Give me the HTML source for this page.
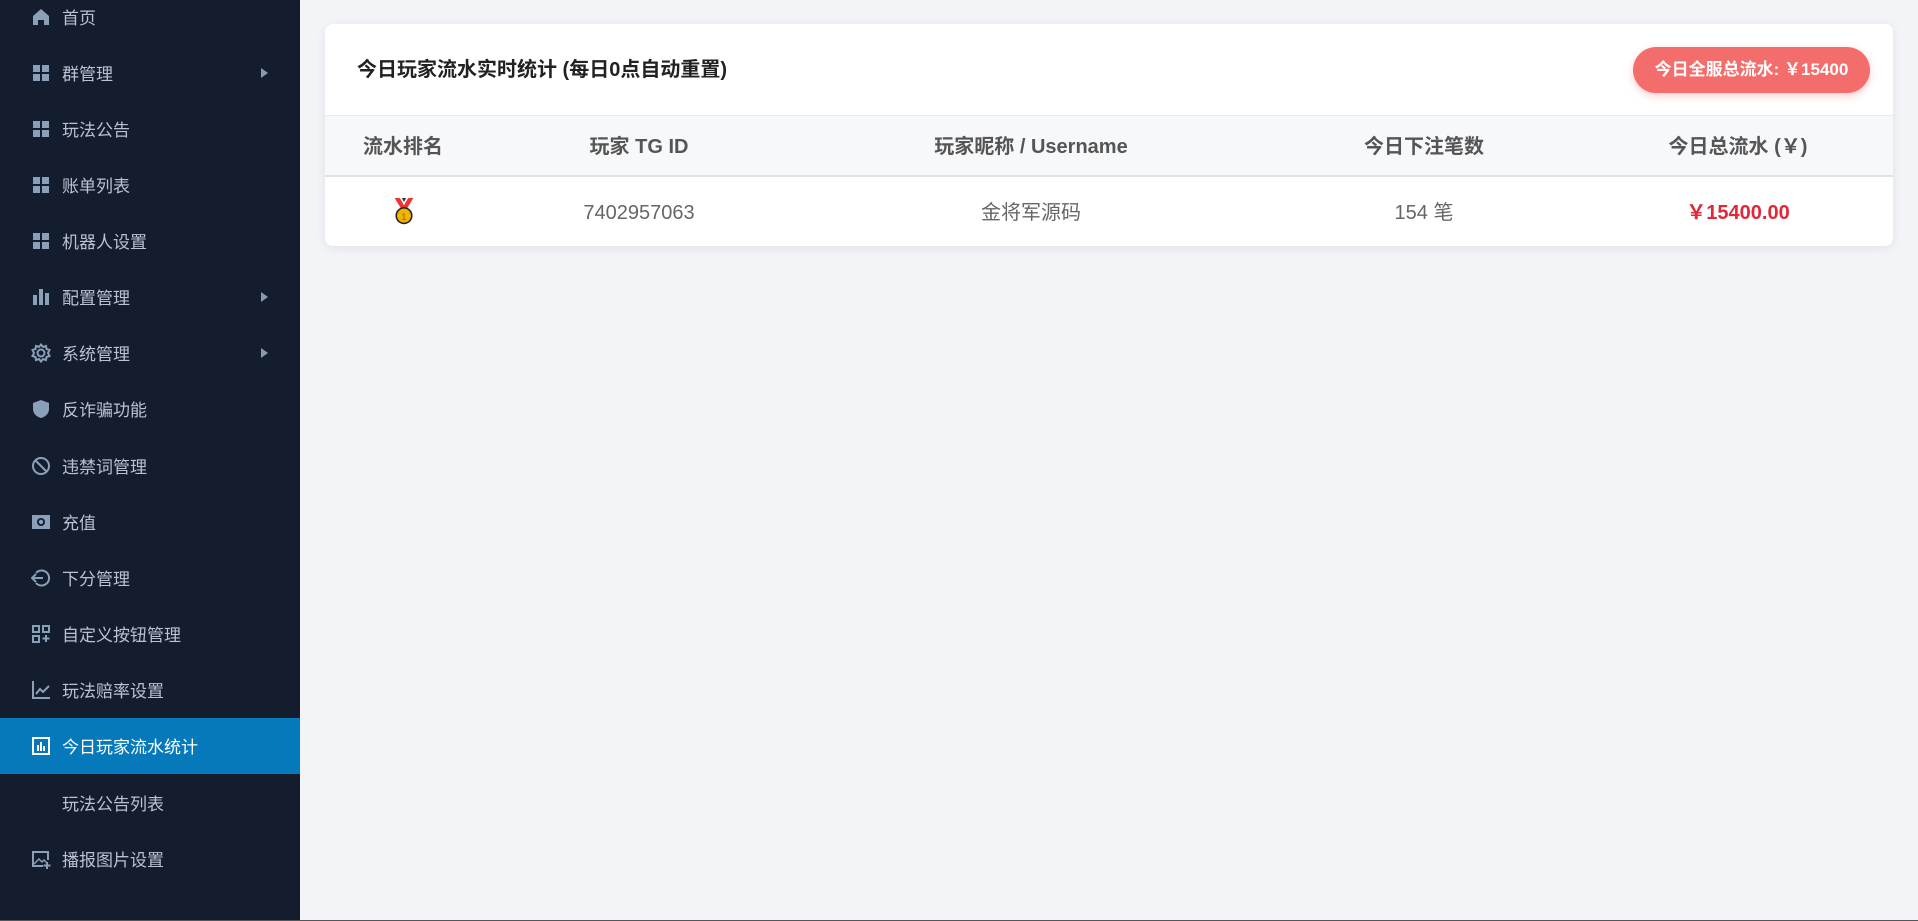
<!DOCTYPE html>
<html><head><meta charset="utf-8"><style>
*{margin:0;padding:0;box-sizing:border-box}
body{width:1918px;height:921px;background:#f2f4f8;font-family:"Liberation Sans","Noto Sans CJK SC",sans-serif;position:relative;overflow:hidden}
.sb{position:absolute;left:0;top:0;width:300px;height:920px;background:#141d2e}
.bl{position:absolute;left:0;top:920px;width:1918px;height:1px;background:#555}
.it{position:absolute;left:0;width:300px;height:56px;color:#b8c2d0;font-size:17px;line-height:20px}
.it .ic{position:absolute;left:31px;width:20px;height:20px;top:18px}
.it span{position:absolute;left:62px;top:20px}
.it .ar{position:absolute;left:261px;top:23px;width:0;height:0;border-left:7px solid #8a99ad;border-top:5px solid transparent;border-bottom:5px solid transparent}
.act{background:#0679bb;color:#fff}
.card{position:absolute;left:325px;top:24px;width:1568px;height:222px;background:#fff;border-radius:8px;box-shadow:0 2px 10px rgba(0,0,0,.08);overflow:hidden}
.title{position:absolute;left:32px;top:34px;font-size:20px;line-height:24px;font-weight:bold;color:#222}
.badge{position:absolute;left:1308px;top:23px;width:237px;height:46px;border-radius:23px;background:#f36d6d;color:#fff;font-weight:bold;font-size:17px;line-height:20px;display:flex;align-items:center;justify-content:center;box-shadow:0 3px 8px rgba(243,109,109,.35)}
.th{position:absolute;left:0;top:91px;width:1568px;height:62px;background:#f7f8fa;border-top:1px solid #e8eaee;border-bottom:2px solid #dfe2e6}
.c{position:absolute;transform:translateX(-50%);white-space:nowrap;font-size:20px;line-height:24px}
.h{top:19px;font-weight:bold;color:#555}
.r{top:177px;color:#666}
</style></head><body>
<div class="sb">
<div class="it" style="top:-11px"><svg class="ic" viewBox="0 0 20 20"><path d="M2 9L10 2l8 7v9h-5v-5H7v5H2z" fill="#8a9fb8"/></svg><span>首页</span></div>
<div class="it" style="top:45px"><svg class="ic" viewBox="0 0 20 20" fill="#8a9fb8"><rect x="2" y="2" width="7" height="7"/><rect x="11" y="2" width="7" height="7"/><rect x="2" y="11" width="7" height="7"/><rect x="11" y="11" width="7" height="7"/></svg><span>群管理</span><i class="ar"></i></div>
<div class="it" style="top:101px"><svg class="ic" viewBox="0 0 20 20" fill="#8a9fb8"><rect x="2" y="2" width="7" height="7"/><rect x="11" y="2" width="7" height="7"/><rect x="2" y="11" width="7" height="7"/><rect x="11" y="11" width="7" height="7"/></svg><span>玩法公告</span></div>
<div class="it" style="top:157px"><svg class="ic" viewBox="0 0 20 20" fill="#8a9fb8"><rect x="2" y="2" width="7" height="7"/><rect x="11" y="2" width="7" height="7"/><rect x="2" y="11" width="7" height="7"/><rect x="11" y="11" width="7" height="7"/></svg><span>账单列表</span></div>
<div class="it" style="top:213px"><svg class="ic" viewBox="0 0 20 20" fill="#8a9fb8"><rect x="2" y="2" width="7" height="7"/><rect x="11" y="2" width="7" height="7"/><rect x="2" y="11" width="7" height="7"/><rect x="11" y="11" width="7" height="7"/></svg><span>机器人设置</span></div>
<div class="it" style="top:269px"><svg class="ic" viewBox="0 0 20 20" fill="#8a9fb8"><rect x="2" y="8" width="4" height="10"/><rect x="8" y="2" width="4" height="16"/><rect x="14" y="6" width="4" height="12"/></svg><span>配置管理</span><i class="ar"></i></div>
<div class="it" style="top:325px"><svg class="ic" viewBox="0 0 20 20" fill="none" stroke="#8a9fb8" stroke-width="2"><circle cx="10" cy="10" r="3.5"/><path d="M10 1.5l2 2.5 3-1 .5 3 3 1-1.5 3 1.5 3-3 1-.5 3-3-1-2 2.5-2-2.5-3 1-.5-3-3-1L3 10 1.5 7l3-1 .5-3 3 1z"/></svg><span>系统管理</span><i class="ar"></i></div>
<div class="it" style="top:381px"><svg class="ic" viewBox="0 0 20 20"><path d="M10 1l8 3v6c0 5-4 8-8 9-4-1-8-4-8-9V4z" fill="#8a9fb8"/></svg><span>反诈骗功能</span></div>
<div class="it" style="top:438px"><svg class="ic" viewBox="0 0 20 20" fill="none" stroke="#8a9fb8" stroke-width="2"><circle cx="10" cy="10" r="8"/><path d="M4.5 4.5l11 11"/></svg><span>违禁词管理</span></div>
<div class="it" style="top:494px"><svg class="ic" viewBox="0 0 20 20"><rect x="1" y="3" width="18" height="14" fill="#8a9fb8"/><circle cx="10" cy="10" r="4" fill="#141d2e"/><circle cx="10" cy="10" r="2.2" fill="#8a9fb8"/></svg><span>充值</span></div>
<div class="it" style="top:550px"><svg class="ic" viewBox="0 0 20 20" fill="none" stroke="#8a9fb8" stroke-width="2"><path d="M5 5a7.5 7.5 0 1 1 0 10"/><path d="M1 10h11M5 6l-4 4 4 4"/></svg><span>下分管理</span></div>
<div class="it" style="top:606px"><svg class="ic" viewBox="0 0 20 20" fill="none" stroke="#8a9fb8" stroke-width="2"><rect x="2" y="2" width="6" height="6"/><rect x="12" y="2" width="6" height="6"/><rect x="2" y="12" width="6" height="6"/><path d="M15 11v7M11.5 14.5h7"/></svg><span>自定义按钮管理</span></div>
<div class="it" style="top:662px"><svg class="ic" viewBox="0 0 20 20" fill="none" stroke="#8a9fb8" stroke-width="2"><path d="M2 1v17h17M5 14l4-5 3 3 6-6"/></svg><span>玩法赔率设置</span></div>
<div class="it act" style="top:718px"><svg class="ic" viewBox="0 0 20 20"><rect x="2" y="2" width="16" height="16" fill="none" stroke="#fff" stroke-width="2"/><rect x="6" y="9" width="2" height="6" fill="#fff"/><rect x="9" y="6" width="2" height="9" fill="#fff"/><rect x="12" y="10" width="2" height="5" fill="#fff"/></svg><span>今日玩家流水统计</span></div>
<div class="it" style="top:775px"><span>玩法公告列表</span></div>
<div class="it" style="top:831px"><svg class="ic" viewBox="0 0 20 20" fill="none" stroke="#8a9fb8" stroke-width="2"><path d="M12 17H2V3h15v8"/><path d="M3 15l5-5 3 3 2-2 3 3" stroke-width="1.5"/><path d="M16 13v7M12.5 16.5h7"/></svg><span>播报图片设置</span></div>
</div>
<div class="bl"></div>
<div class="card">
<div class="title">今日玩家流水实时统计 (每日0点自动重置)</div>
<div class="badge">今日全服总流水: ￥15400</div>
<div class="th">
<div class="c h" style="left:78px">流水排名</div>
<div class="c h" style="left:314px">玩家 TG ID</div>
<div class="c h" style="left:706px">玩家昵称 / Username</div>
<div class="c h" style="left:1099px">今日下注笔数</div>
<div class="c h" style="left:1413px">今日总流水 (￥)</div>
</div>
<svg style="position:absolute;left:68px;top:173px" width="22" height="29" viewBox="0 0 20 28"><path d="M1 1h18l-6 10H7z" fill="#e33"/><path d="M6 1h8l-4 7z" fill="#fff"/><path d="M8 1h4l-2 4z" fill="#333"/><circle cx="10" cy="18" r="7.5" fill="#f0b400" stroke="#222" stroke-width="1.5"/><text x="10" y="22" font-size="9" text-anchor="middle" fill="#a06a00" font-family="Liberation Sans">1</text></svg>
<div class="c r" style="left:314px">7402957063</div>
<div class="c r" style="left:706px">金将军源码</div>
<div class="c r" style="left:1099px">154 笔</div>
<div class="c r" style="left:1413px;color:#e0283a;font-weight:bold">￥15400.00</div>
</div>
</body></html>
